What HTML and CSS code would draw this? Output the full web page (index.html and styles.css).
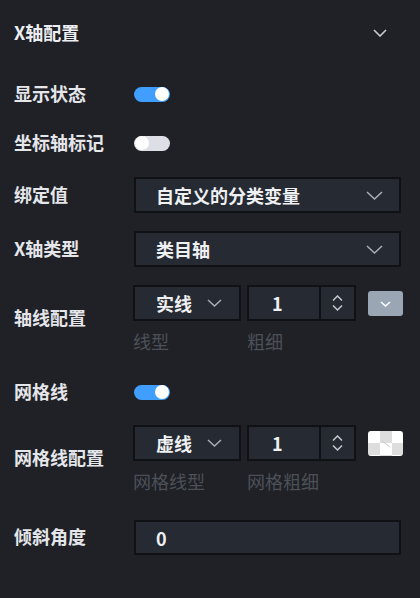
FILE: index.html
```html
<!DOCTYPE html>
<html lang="zh-CN">
<head>
    <meta charset="UTF-8">
    <meta name="viewport" content="width=device-width, initial-scale=1.0">
    <title>X轴配置</title>
    <link rel="stylesheet" href="styles.css">
</head>
<body>

<div class="panel">
    <div class="panel-header">
        <span class="panel-title">X轴配置</span>
        <svg class="collapse-icon" width="14" height="8" viewBox="0 0 14 8">
            <path d="M1 1 L7 7 L13 1" fill="none" stroke="#c8ccd3" stroke-width="1.6"/>
        </svg>
    </div>

    <div class="form">
        <div class="row row-show">
            <label class="row-label">显示状态</label>
            <span class="switch on"></span>
        </div>

        <div class="row row-mark">
            <label class="row-label">坐标轴标记</label>
            <span class="switch"></span>
        </div>

        <div class="row row-bind">
            <label class="row-label">绑定值</label>
            <div class="select select-wide">
                <span>自定义的分类变量</span>
                <svg width="17" height="9" viewBox="0 0 17 9">
                    <path d="M1 1 L8.5 8 L16 1" fill="none" stroke="#a9aeb6" stroke-width="1.5"/>
                </svg>
            </div>
        </div>

        <div class="row row-type">
            <label class="row-label">X轴类型</label>
            <div class="select select-wide">
                <span>类目轴</span>
                <svg width="17" height="9" viewBox="0 0 17 9">
                    <path d="M1 1 L8.5 8 L16 1" fill="none" stroke="#a9aeb6" stroke-width="1.5"/>
                </svg>
            </div>
        </div>

        <div class="row row-axis">
            <label class="row-label">轴线配置</label>
            <div class="group">
                <div class="group-controls">
                    <div class="field">
                        <div class="select select-small">
                            <span>实线</span>
                            <svg width="15" height="8" viewBox="0 0 15 8">
                                <path d="M1 1 L7.5 7 L14 1" fill="none" stroke="#a9aeb6" stroke-width="1.5"/>
                            </svg>
                        </div>
                        <div class="field-label">线型</div>
                    </div>
                    <div class="field">
                        <div class="number">
                            <span class="number-value">1</span>
                            <span class="stepper">
                                <svg width="11" height="6" viewBox="0 0 11 6"><path d="M1 5.5 L5.5 1 L10 5.5" fill="none" stroke="#c3c7cd" stroke-width="1.5"/></svg>
                                <svg width="11" height="6" viewBox="0 0 11 6"><path d="M1 0.5 L5.5 5 L10 0.5" fill="none" stroke="#c3c7cd" stroke-width="1.5"/></svg>
                            </span>
                        </div>
                        <div class="field-label">粗细</div>
                    </div>
                    <span class="swatch swatch-grey">
                        <svg width="11" height="6" viewBox="0 0 11 6"><path d="M1 1 L5.5 5 L10 1" fill="none" stroke="#ffffff" stroke-width="1.5"/></svg>
                    </span>
                </div>
            </div>
        </div>

        <div class="row row-grid">
            <label class="row-label">网格线</label>
            <span class="switch on"></span>
        </div>

        <div class="row row-grid-conf">
            <label class="row-label">网格线配置</label>
            <div class="group">
                <div class="group-controls">
                    <div class="field">
                        <div class="select select-small">
                            <span>虚线</span>
                            <svg width="15" height="8" viewBox="0 0 15 8">
                                <path d="M1 1 L7.5 7 L14 1" fill="none" stroke="#a9aeb6" stroke-width="1.5"/>
                            </svg>
                        </div>
                        <div class="field-label">网格线型</div>
                    </div>
                    <div class="field">
                        <div class="number">
                            <span class="number-value">1</span>
                            <span class="stepper">
                                <svg width="11" height="6" viewBox="0 0 11 6"><path d="M1 5.5 L5.5 1 L10 5.5" fill="none" stroke="#c3c7cd" stroke-width="1.5"/></svg>
                                <svg width="11" height="6" viewBox="0 0 11 6"><path d="M1 0.5 L5.5 5 L10 0.5" fill="none" stroke="#c3c7cd" stroke-width="1.5"/></svg>
                            </span>
                        </div>
                        <div class="field-label">网格粗细</div>
                    </div>
                    <span class="swatch swatch-empty">
                        <svg width="10" height="8" viewBox="0 0 10 8"><path d="M1 1 L9 7" fill="none" stroke="#c9c9c9" stroke-width="1"/></svg>
                    </span>
                </div>
            </div>
        </div>

        <div class="row row-angle">
            <label class="row-label">倾斜角度</label>
            <div class="input">0</div>
        </div>
    </div>
</div>

</body>
</html>
```

FILE: styles.css
```css
body {
    margin: 0;
    padding: 0;
    background-color: #1f2126;
    color: #e4e6ea;
    font-family: "Noto Sans CJK SC", "Noto Sans", sans-serif;
    width: 420px;
    height: 598px;
    overflow: hidden;
}

.panel {
    padding: 0 19px 0 14px;
}

.panel-header {
    height: 66px;
    display: flex;
    justify-content: space-between;
    align-items: center;
    padding-right: 14px;
}

.panel-title {
    font-size: 18px;
    font-weight: bold;
    color: #eceef1;
    padding-bottom: 2px;
}

.form {
    display: flex;
    flex-direction: column;
}

.row {
    display: flex;
    align-items: center;
}

.row-label {
    width: 119px;
    flex-shrink: 0;
    font-size: 18px;
    font-weight: bold;
    color: #e4e6ea;
    padding-bottom: 3px;
}

.row-show { height: 36px; margin-top: 10px; }
.row-mark { height: 36px; margin-top: 13px; }
.row-bind { margin-top: 16px; }
.row-type { margin-top: 18px; }
.row-axis { margin-top: 18px; }
.row-grid { height: 36px; margin-top: 22px; }
.row-grid-conf { margin-top: 15px; }
.row-angle { margin-top: 28px; }

.switch {
    position: relative;
    width: 36px;
    height: 15px;
    margin-left: 1px;
    border-radius: 8px;
    background-color: #dcdfe6;
}

.switch::after {
    content: "";
    position: absolute;
    top: 0.5px;
    left: 1px;
    width: 14px;
    height: 14px;
    border-radius: 50%;
    background-color: #fff;
}

.switch.on {
    background-color: #409eff;
}

.switch.on::after {
    left: auto;
    right: 1px;
}

.select,
.number,
.input {
    box-sizing: border-box;
    height: 36px;
    background-color: #262a32;
    border: 2px solid #101114;
    display: flex;
    align-items: center;
    font-size: 18px;
    font-weight: bold;
    color: #eef0f2;
}

.select {
    justify-content: space-between;
    padding: 0 16px 0 20px;
}

.select-wide {
    flex: 1;
    margin-left: 1px;
}

.select-small {
    width: 108px;
    padding: 0 17px 0 21px;
}

.group-controls {
    display: flex;
    align-items: flex-start;
}

.field {
    display: flex;
    flex-direction: column;
    margin-right: 6px;
}

.field-label {
    margin-top: 9px;
    font-size: 18px;
    line-height: 22px;
    color: #4c5058;
}

.number {
    width: 109px;
    padding-left: 23px;
}

.number-value {
    flex: 1;
}

.stepper {
    width: 33px;
    height: 100%;
    border-left: 2px solid #101114;
    display: flex;
    flex-direction: column;
    justify-content: center;
    align-items: center;
    gap: 4px;
}

.stepper svg {
    display: block;
}

.swatch {
    box-sizing: border-box;
    margin: 6px 0 0 6px;
    width: 35px;
    height: 25px;
    border-radius: 3px;
    display: flex;
    align-items: center;
    justify-content: center;
}

.swatch-grey {
    background-color: #9ba6b4;
}

.swatch-empty {
    background-color: #ffffff;
    background-image:
        linear-gradient(45deg, #dddddd 25%, transparent 25%, transparent 75%, #dddddd 75%),
        linear-gradient(45deg, #dddddd 25%, transparent 25%, transparent 75%, #dddddd 75%);
    background-size: 24px 24px;
    background-position: 0 0, 12px 12px;
}

.input {
    flex: 1;
    height: 35px;
    margin-left: 1px;
    padding-left: 20px;
}
```
